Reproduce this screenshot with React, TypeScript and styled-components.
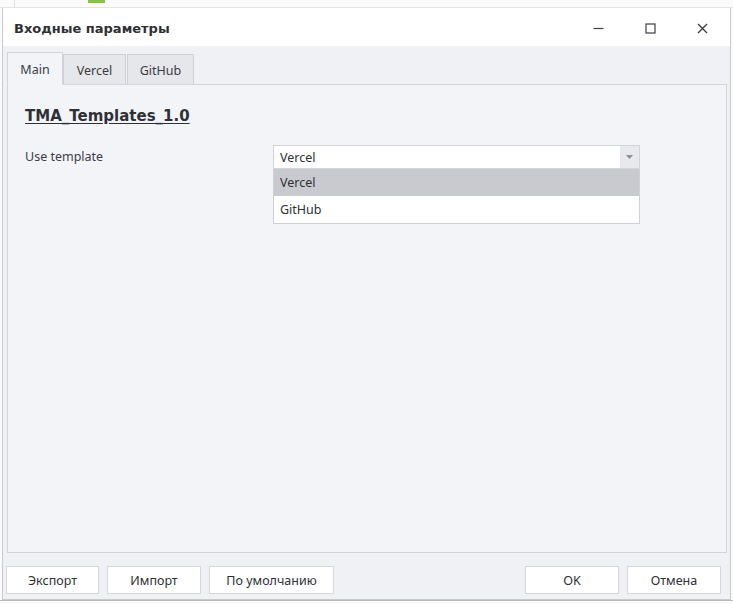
import React from "react";
import styled, { createGlobalStyle } from "styled-components";

const Global = createGlobalStyle`
  html, body { margin: 0; padding: 0; background: #f7f7f8; }
  body { font-family: "Noto Sans", "Open Sans", "DejaVu Sans", sans-serif; font-size: 12.5px; color: #333; overflow: hidden; }
`;

const Desktop = styled.div`
  position: relative;
  width: 733px;
  height: 604px;
  background: #fbfbfb;
  overflow: hidden;
`;

const BackStrip = styled.div`
  height: 8px;
  display: flex;
  align-items: flex-start;
  border-bottom: 1px solid #e4e4e6;
  box-sizing: border-box;
`;

const BackTick = styled.div<{ $left: number; $w: number; $color: string; $h: number }>`
  margin-left: ${(p) => p.$left}px;
  width: ${(p) => p.$w}px;
  height: ${(p) => p.$h}px;
  background: ${(p) => p.$color};
`;

const Window = styled.div`
  margin-left: 2px;
  width: 729px;
  height: 592px;
  box-sizing: border-box;
  border: 1px solid #c9cacf;
  border-top: none;
  background: #f0f1f5;
  display: flex;
  flex-direction: column;
`;

const TitleBar = styled.div`
  height: 38px;
  background: #ffffff;
  display: flex;
  align-items: center;
  padding-left: 11px;
  flex-shrink: 0;
`;

const Title = styled.div`
  font-family: "DejaVu Sans", "Noto Sans", sans-serif;
  font-weight: 700;
  font-size: 13px;
  color: #2e3035;
  flex: 1;
  margin-top: 2px;
`;

const Controls = styled.div`
  display: flex;
  align-items: center;
  margin-right: 2px;
`;

const CtrlBtn = styled.div`
  width: 52px;
  height: 38px;
  display: flex;
  align-items: center;
  justify-content: center;
  margin-top: 2px;
`;

const Body = styled.div`
  flex: 1;
  display: flex;
  flex-direction: column;
  padding: 6px 3px 0 4px;
`;

const TabRow = styled.div`
  display: flex;
  align-items: flex-end;
  height: 33px;
  position: relative;
  z-index: 1;
  margin-bottom: -1px;
`;

const Tab = styled.div<{ $active?: boolean; $w: number }>`
  width: ${(p) => p.$w}px;
  height: ${(p) => (p.$active ? 33 : 31)}px;
  box-sizing: border-box;
  border: 1px solid ${(p) => (p.$active ? "#d3d4da" : "#cfd0d6")};
  border-bottom: ${(p) => (p.$active ? "1px solid #f3f4f8" : "1px solid #d3d4da")};
  background: ${(p) => (p.$active ? "#f3f4f8" : "#e6e7eb")};
  margin-right: ${(p) => (p.$active ? 0 : 1)}px;
  display: flex;
  align-items: center;
  justify-content: center;
  color: #3a3c42;
  padding-top: ${(p) => (p.$active ? 2 : 1)}px;
`;

const Panel = styled.div`
  height: 469px;
  box-sizing: border-box;
  border: 1px solid #d3d4da;
  background: #f3f4f8;
  padding: 21px 17px;
`;

const Heading = styled.div`
  font-family: "DejaVu Sans", "Noto Sans", sans-serif;
  font-weight: 700;
  font-size: 15px;
  color: #2e3035;
  text-decoration: underline;
  text-underline-offset: 2px;
  line-height: 20px;
`;

const FieldRow = styled.div`
  display: grid;
  grid-template-columns: 248px 367px;
  margin-top: 19px;
  align-items: start;
`;

const Label = styled.div`
  color: #3a3d48;
  line-height: 23px;
`;

const SelectWrap = styled.div`
  position: relative;
`;

const SelectBox = styled.div`
  height: 24px;
  box-sizing: border-box;
  border: 1px solid #d3d4da;
  background: #fff;
  display: flex;
  align-items: stretch;
`;

const SelectValue = styled.div`
  flex: 1;
  display: flex;
  align-items: center;
  padding-left: 6px;
  color: #2e3035;
`;

const Arrow = styled.div`
  width: 19px;
  background: #e8e9ed;
  display: flex;
  align-items: center;
  justify-content: center;
`;

const DropList = styled.div`
  position: absolute;
  left: 0;
  right: 0;
  top: 24px;
  border: 1px solid #cfd0d6;
  border-top: none;
  background: #fff;
`;

const Option = styled.div<{ $hl?: boolean }>`
  height: 27px;
  display: flex;
  align-items: center;
  padding-left: 6px;
  background: ${(p) => (p.$hl ? "#c9cacf" : "#fff")};
  color: #2e3035;
`;

const Footer = styled.div`
  display: flex;
  align-items: center;
  padding: 13px 6px 0 0;
  margin-left: -1px;
`;

const Btn = styled.div<{ $w: number }>`
  width: ${(p) => p.$w}px;
  height: 28px;
  box-sizing: border-box;
  border: 1px solid #d6d7dc;
  background: #fff;
  display: flex;
  align-items: center;
  justify-content: center;
  color: #2e3035;
  margin-right: 8px;
  &:last-child { margin-right: 0; }
`;

const Spacer = styled.div`
  flex: 1;
`;

const BottomStrip = styled.div`
  height: 4px;
  display: flex;
  border-top: 1px solid #b8b9bd;
`;

export default function App() {
  return (
    <>
      <Global />
      <Desktop>
        <BackStrip>
          <BackTick $left={14} $w={1} $h={8} $color="#e0e0e2" />
          <BackTick $left={73} $w={17} $h={3} $color="#86c440" />
        </BackStrip>
        <Window>
          <TitleBar>
            <Title>Входные параметры</Title>
            <Controls>
              <CtrlBtn>
                <svg width="11" height="11" viewBox="0 0 11 11">
                  <line x1="0.5" y1="5.5" x2="10.5" y2="5.5" stroke="#3c3f46" strokeWidth="1.2" />
                </svg>
              </CtrlBtn>
              <CtrlBtn>
                <svg width="11" height="11" viewBox="0 0 11 11">
                  <rect x="1" y="1" width="9" height="9" fill="none" stroke="#3c3f46" strokeWidth="1.2" />
                </svg>
              </CtrlBtn>
              <CtrlBtn>
                <svg width="11" height="11" viewBox="0 0 11 11">
                  <path d="M1 1 L10 10 M10 1 L1 10" stroke="#3c3f46" strokeWidth="1.4" />
                </svg>
              </CtrlBtn>
            </Controls>
          </TitleBar>
          <Body>
            <TabRow>
              <Tab $active $w={56}>Main</Tab>
              <Tab $w={63}>Vercel</Tab>
              <Tab $w={67}>GitHub</Tab>
            </TabRow>
            <Panel>
              <Heading>TMA_Templates_1.0</Heading>
              <FieldRow>
                <Label>Use template</Label>
                <SelectWrap>
                  <SelectBox>
                    <SelectValue>Vercel</SelectValue>
                    <Arrow>
                      <svg width="7" height="4" viewBox="0 0 7 4">
                        <path d="M0 0 L7 0 L3.5 4 Z" fill="#8d8f96" />
                      </svg>
                    </Arrow>
                  </SelectBox>
                  <DropList>
                    <Option $hl>Vercel</Option>
                    <Option>GitHub</Option>
                  </DropList>
                </SelectWrap>
              </FieldRow>
            </Panel>
            <Footer>
              <Btn $w={93}>Экспорт</Btn>
              <Btn $w={94}>Импорт</Btn>
              <Btn $w={125}>По умолчанию</Btn>
              <Spacer />
              <Btn $w={94}>OK</Btn>
              <Btn $w={94}>Отмена</Btn>
            </Footer>
          </Body>
        </Window>
        <BottomStrip />
      </Desktop>
    </>
  );
}
